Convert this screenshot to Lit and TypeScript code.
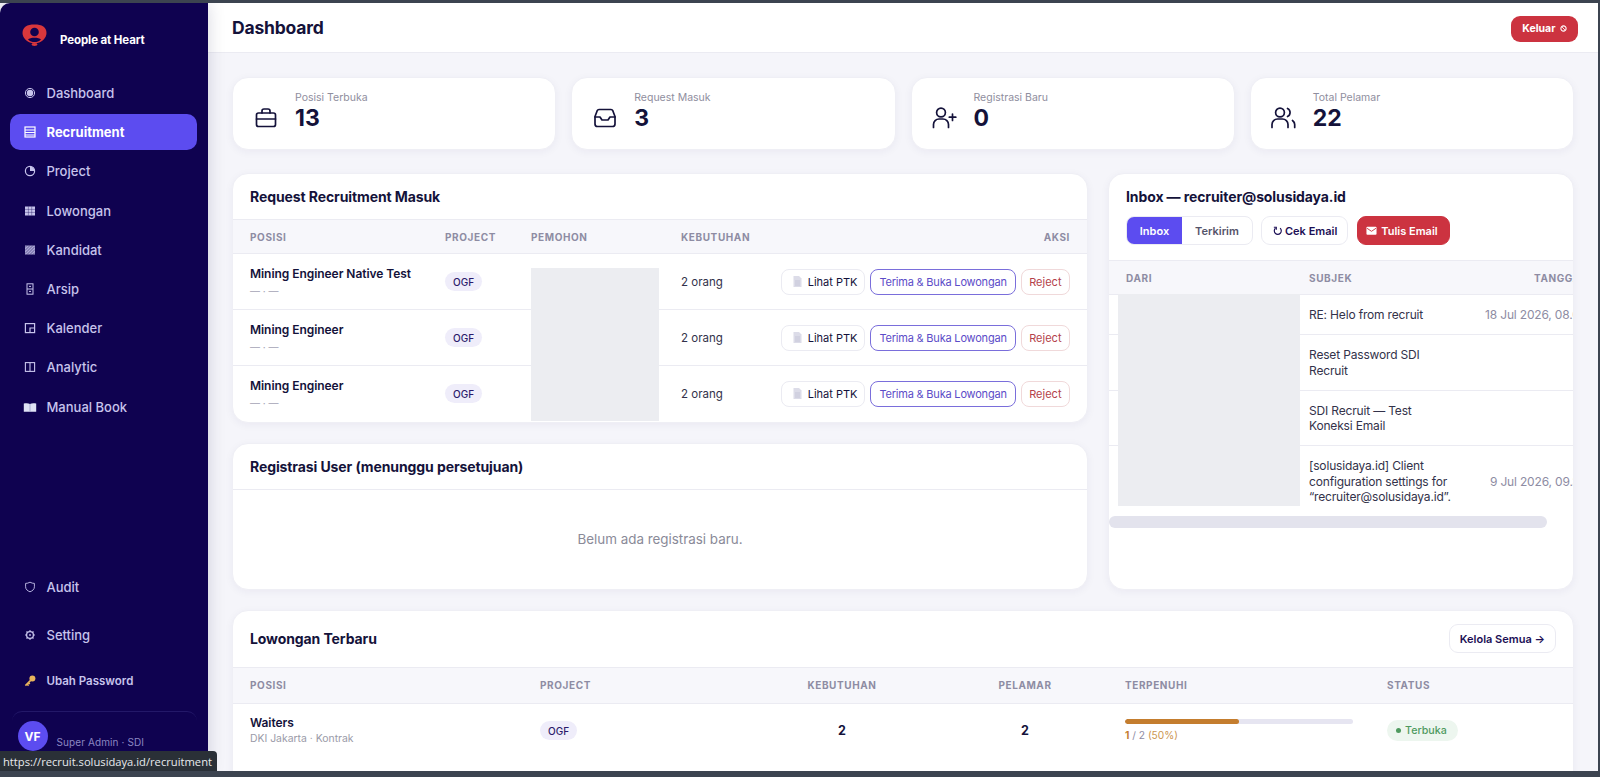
import { LitElement, css, html, svg } from "lit";
import { customElement } from "lit/decorators.js";

const navTop: [string, string, boolean?][] = [
  ["Dashboard", "dot"],
  ["Recruitment", "list", true],
  ["Project", "pie"],
  ["Lowongan", "grid"],
  ["Kandidat", "hatch"],
  ["Arsip", "cabinet"],
  ["Kalender", "cal"],
  ["Analytic", "split"],
  ["Manual Book", "book"],
];

const glyph = (name: string) => {
  switch (name) {
    case "dot":
      return svg`<circle cx="7" cy="7" r="4.6" fill="none" stroke="currentColor" stroke-width="1"/><circle cx="7" cy="7" r="3.2" fill="currentColor"/>`;
    case "list":
      return svg`<rect x="2" y="2" width="10" height="10" fill="none" stroke="currentColor" stroke-width="1.2"/><path d="M2 5h10M2 7.5h10M2 10h10" stroke="currentColor" stroke-width="1.2"/>`;
    case "pie":
      return svg`<circle cx="7" cy="7" r="4.6" fill="none" stroke="currentColor" stroke-width="1.2"/><path d="M7 7V2.4A4.6 4.6 0 0 1 11.6 7Z" fill="currentColor"/>`;
    case "grid":
      return svg`<rect x="2" y="2.5" width="10" height="9" fill="currentColor"/><path d="M2 5.4h10M2 8.4h10M5.4 2.5v9M8.7 2.5v9" stroke="#0f0250" stroke-width=".35"/>`;
    case "hatch":
      return svg`<rect x="2" y="2.5" width="10" height="9" fill="currentColor" opacity=".85"/><path d="M2 4.5l2-2M2 7.5l5-5M2 10.5l8-8M4 11.5l8-8M7 11.5l5-5M10 11.5l2-2" stroke="#0f0250" stroke-width=".45"/>`;
    case "cabinet":
      return svg`<rect x="4" y="1.8" width="6" height="10.4" fill="none" stroke="currentColor" stroke-width="1"/><path d="M4 7h6M6 4.4h2M6 9.4h2" stroke="currentColor" stroke-width="1"/>`;
    case "cal":
      return svg`<rect x="2.4" y="2.6" width="9.2" height="9" fill="none" stroke="currentColor" stroke-width="1.2"/><path d="M7 11.6V7h4.6" fill="none" stroke="currentColor" stroke-width="1.2"/>`;
    case "split":
      return svg`<rect x="2.4" y="2.6" width="9.2" height="8.8" fill="none" stroke="currentColor" stroke-width="1.1"/><path d="M7 2.6v8.8" stroke="currentColor" stroke-width="1.1"/>`;
    case "book":
      return svg`<path d="M.8 3.6C3 3 5.4 3 7 4c1.6-1 4-1 6.2-.4v8.2H.8Z" fill="#dfe3f5"/><path d="M7 4v7.6" stroke="#8d93c4" stroke-width=".7"/>`;
    case "shield":
      return svg`<path d="M7 2.2c1.6.9 3 1.2 4.4 1.2v3.4c0 2.6-2 4.1-4.4 5-2.4-.9-4.4-2.4-4.4-5V3.4C4 3.4 5.4 3.1 7 2.2Z" fill="none" stroke="currentColor" stroke-width=".9"/>`;
    case "gear":
      return svg`<circle cx="7" cy="7" r="3.4" fill="none" stroke="currentColor" stroke-width="1.3"/><circle cx="7" cy="7" r=".9" fill="currentColor"/><path d="M7 2v1.4M7 10.6V12M2 7h1.4M10.6 7H12M3.5 3.5l1 1M9.5 9.5l1 1M10.5 3.5l-1 1M4.5 9.5l-1 1" stroke="currentColor" stroke-width="1.1"/>`;
    case "key":
      return svg`<circle cx="9.4" cy="4.6" r="3" fill="#e8b45c"/><path d="M7.6 6.4L2.4 11.6M4 10l1.6 1.6M5.4 8.6L6.8 10" stroke="#e8b45c" stroke-width="1.6" fill="none"/>`;
  }
  return svg``;
};

const navIcon = (name: string) =>
  html`<svg class="nav-icon" viewBox="0 0 14 14">${glyph(name)}</svg>`;

const statIcons: Record<string, unknown> = {
  brief: svg`<rect x="2.5" y="7" width="19" height="13.5" rx="2"/><path d="M8 7V5a2 2 0 0 1 2-2h4a2 2 0 0 1 2 2v2M2.5 13h19"/>`,
  inbox: svg`<path d="M6 3.5h12a2 2 0 0 1 1.8 1.2L22 10.5V18a2.5 2.5 0 0 1-2.5 2.5h-15A2.5 2.5 0 0 1 2 18v-7.5l2.2-5.8A2 2 0 0 1 6 3.5Z"/><path d="M2 11h5l2 3h6l2-3h5"/>`,
  plus: svg`<circle cx="8" cy="6.5" r="4.4"/><path d="M.5 21.5v-3A5.5 5.5 0 0 1 6 13h4a5.5 5.5 0 0 1 5.5 5.5v3M19.5 8v6.5M16.3 11.2h6.5"/>`,
  users: svg`<circle cx="8" cy="6.5" r="4.4"/><path d="M0 21.5v-3A5.5 5.5 0 0 1 5.5 13h5a5.5 5.5 0 0 1 5.5 5.5v3M15.5 2.5a4.4 4.4 0 0 1 0 8M20.5 14.5a5.5 5.5 0 0 1 2.2 4v3"/>`,
};

const requests = ["Mining Engineer Native Test", "Mining Engineer", "Mining Engineer"];

const mails: [string, string][] = [
  ["RE: Helo from recruit", "18 Jul 2026, 08.00"],
  ["Reset Password SDI Recruit", ""],
  ["SDI Recruit — Test Koneksi Email", ""],
  ["[solusidaya.id] Client configuration settings for “recruiter@solusidaya.id”.", "9 Jul 2026, 09.30"],
];

@customElement("app-root")
export class AppRoot extends LitElement {
  static styles = css`
    :host {
      display: block;
      width: 1600px;
      height: 777px;
      overflow: hidden;
      background: #3c4450;
      font-family: Inter, "Noto Sans", sans-serif;
      color: #14123a;
    }
    * { box-sizing: border-box; }

    .window {
      position: relative;
      display: flex;
      width: 1598px;
      height: 768px;
      margin-top: 3px;
      background: #f5f5fa;
      overflow: hidden;
    }

    /* sidebar */
    .side {
      flex: 0 0 208px;
      display: flex;
      flex-direction: column;
      background: #0f0250;
      border-radius: 10px 0 0 0;
      box-shadow: 0 0 18px rgba(15, 10, 60, 0.16);
      z-index: 2;
      padding: 0 11px 0 9.5px;
      color: #c7c4ec;
    }
    .brand {
      display: flex;
      align-items: center;
      gap: 13px;
      height: 72px;
      padding: 2px 0 0 12.5px;
      color: #fff;
      font-size: 11.5px;
      font-weight: 700;
      letter-spacing: -0.1px;
    }
    .brand svg { width: 25px; height: 22px; margin-top: -10px; }
    .nav { display: flex; flex-direction: column; gap: 3.2px; }
    .item {
      display: flex;
      align-items: center;
      height: 36px;
      padding-left: 13px;
      gap: 10px;
      border-radius: 10px;
      font-size: 13px;
      font-weight: 500;
    }
    .item.on { background: #5c4cf0; color: #fff; font-weight: 700; }
    .nav-icon { width: 14px; height: 14px; flex: none; }
    .nav-bottom { margin-top: auto; display: flex; flex-direction: column; }
    .nav-bottom .item { height: 48px; }
    .nav-bottom .item.small { height: 44px; font-size: 11.5px; font-weight: 600; }
    .me {
      display: flex;
      gap: 9px;
      height: 60px;
      margin: 8px 0 0 2px;
      padding: 9px 6px 0 6px;
      border-top: 1px solid #231868;
      border-radius: 10px 10px 0 0;
    }
    .avatar {
      flex: none;
      width: 30px;
      height: 30px;
      border-radius: 50%;
      background: #5c4cf0;
      color: #fff;
      font-size: 12px;
      font-weight: 700;
      display: flex;
      align-items: center;
      justify-content: center;
    }
    .role { margin-top: 15px; font-size: 10px; color: #8b87c2; letter-spacing: 0.1px; }

    /* main */
    .main { flex: 1; min-width: 0; display: flex; flex-direction: column; }
    .top {
      flex: none;
      height: 50px;
      display: flex;
      align-items: center;
      justify-content: space-between;
      padding: 0 20px 0 24px;
      background: #fff;
      border-bottom: 1px solid #ebebf2;
    }
    h1 { margin: 0; font-size: 17.5px; font-weight: 700; letter-spacing: -0.2px; }
    .logout {
      display: flex;
      align-items: center;
      gap: 4px;
      height: 26px;
      margin-top: 2px;
      padding: 0 11.5px;
      border-radius: 9px;
      background: #cc3340;
      color: #fff;
      font-size: 10.5px;
      font-weight: 700;
    }
    .logout svg { width: 7px; height: 7px; }

    .content {
      flex: 1;
      min-height: 0;
      padding: 24px 24px 0;
      display: flex;
      flex-direction: column;
      gap: 20px;
    }
    .card {
      background: #fff;
      border: 1px solid #efeff5;
      border-radius: 16px;
      box-shadow: 0 2px 8px rgba(30, 25, 90, 0.05);
      overflow: hidden;
    }

    .stats { display: grid; grid-template-columns: repeat(4, 1fr); gap: 15px; margin-bottom: 3px; }
    .stat {
      height: 73px;
      display: grid;
      grid-template-columns: 24px 1fr;
      grid-template-rows: auto auto;
      column-gap: 17px;
      align-content: center;
      padding: 0 0 3px 21px;
    }
    .stat .label { grid-column: 2; margin-bottom: -2px; font-size: 10.5px; color: #8f8e9e; line-height: 14px; }
    .stat svg {
      grid-column: 1;
      grid-row: 2;
      align-self: center;
      width: 24px;
      height: 24px;
      fill: none;
      stroke: #14123a;
      stroke-width: 1.7;
      stroke-linecap: round;
      stroke-linejoin: round;
      overflow: visible;
    }
    .stat .num { grid-column: 2; grid-row: 2; font-size: 23px; font-weight: 700; line-height: 30px; }

    .mid { display: grid; grid-template-columns: 856px 466px; column-gap: 20px; }
    .mid-left { display: flex; flex-direction: column; gap: 20px; }
    .head {
      display: flex;
      align-items: center;
      justify-content: space-between;
      padding: 0 17px;
      height: 45px;
      font-size: 14px;
      font-weight: 700;
      letter-spacing: -0.1px;
    }

    table { width: 100%; border-collapse: collapse; table-layout: fixed; }
    th {
      height: 34px;
      padding: 0 17px;
      background: #f7f7fb;
      border-top: 1px solid #ebebf2;
      border-bottom: 1px solid #ebebf2;
      font-size: 10px;
      font-weight: 700;
      letter-spacing: 0.6px;
      color: #8e8ca3;
      text-align: left;
    }
    td { padding: 0 17px; font-size: 12px; border-bottom: 1px solid #ebebf2; color: #33324a; }
    tr:last-child td { border-bottom: 0; }
    .r { text-align: right; }
    .c { text-align: center; }
    .name { font-weight: 600; color: #14123a; line-height: 16px; letter-spacing: -0.05px; }
    .sub { margin-top: 2px; font-size: 10px; color: #a2a1b3; line-height: 14px; }
    .pill {
      display: inline-flex;
      align-items: center;
      height: 19px;
      padding: 0 8px;
      border-radius: 10px;
      background: #efedfa;
      color: #2c1a6b;
      font-size: 10px;
      font-weight: 500;
    }

    .wrap { position: relative; }
    .mask { position: absolute; background: #ecedf1; }
    .req tbody tr { height: 56px; }
    .req .qty { white-space: nowrap; font-size: 11.5px; }
    .req .mask { left: 298px; top: 49px; width: 128px; height: 153px; }
    .req .cell-name { padding-right: 0; }
    .req .cell-acts { padding-left: 0; overflow: visible; }
    .acts { display: flex; justify-content: flex-end; gap: 5px; }
    .btn {
      display: inline-flex;
      align-items: center;
      justify-content: center;
      gap: 6px;
      height: 26px;
      padding: 0 7px 0 11px;
      border: 1px solid #ebebf2;
      border-radius: 8px;
      background: #fff;
      font-size: 11px;
      font-weight: 400;
      color: #14123a;
      white-space: nowrap;
    }
    .btn svg { width: 9px; height: 11px; }
    .btn.ok { border-color: #7a6edb; color: #5c4cc8; padding: 0 8px; letter-spacing: -0.2px; }
    .btn.no { border-color: #f0d9da; color: #b4424a; padding: 0 7.5px; }

    .empty {
      height: 100px;
      display: flex;
      align-items: center;
      justify-content: center;
      border-top: 1px solid #ebebf2;
      font-size: 13.4px;
      color: #8a8a98;
    }

    /* inbox */
    .inbox { display: flex; flex-direction: column; }
    .inbox .title { padding: 14px 17px 0; font-size: 14px; font-weight: 700; line-height: 18px; letter-spacing: -0.1px; }
    .tools { display: flex; gap: 9px; padding: 10px 17px 15px; }
    .tabs {
      display: flex;
      height: 29px;
      margin-right: -1px;
      border: 1px solid #ebebf2;
      border-radius: 8px;
      overflow: hidden;
      font-size: 11px;
      font-weight: 600;
    }
    .tab { display: flex; align-items: center; justify-content: center; color: #55546a; width: 70px; }
    .tab.on { width: 55px; background: #5c4cf0; color: #fff; }
    .tool {
      display: flex;
      align-items: center;
      gap: 2px;
      height: 29px;
      padding: 0 10px 0 11px;
      border-radius: 9px;
      font-size: 11px;
      font-weight: 600;
      border: 1px solid #ebebf2;
      color: #1c0f55;
    }
    .tool svg { width: 10px; height: 10px; }
    .tool.red { background: #cc3340; border-color: #cc3340; color: #fff; padding: 0 11px 0 8px; gap: 4px; }
    .tool.red svg { width: 11px; height: 11px; }
    .scroller { overflow: hidden; }
    .mail { width: 494px; }
    .mail td { padding: 12px 17px; line-height: 15.3px; letter-spacing: -0.17px; }
    .mail td.subject { padding-right: 0; }
    .mail td.date { padding: 12px 16px 12px 0; color: #8e8ca3; white-space: nowrap; }
    .mail th:last-child { padding: 0 16px 0 0; }
    .mail .mask { left: 9px; top: 34px; width: 182px; height: 212px; }
    .scrollbar { flex: none; width: 438px; height: 12px; border-radius: 6px; background: #e3e3ed; }

    /* lowongan */
    .jobs { flex: none; height: 180px; border-radius: 16px 16px 0 0; }
    .jobs .head { height: 56px; }
    .kelola {
      display: flex;
      align-items: center;
      height: 29px;
      padding: 0 10px;
      border: 1px solid #ebebf2;
      border-radius: 9px;
      font-size: 11px;
      font-weight: 600;
      color: #1c0f55;
      letter-spacing: 0;
    }
    .jobs th { height: 36px; }
    .jobs tbody tr { height: 55px; }
    .jobs .sub { margin-top: 1px; font-size: 10.4px; color: #9a9aa8; }
    .jobs .cell-bar { padding-right: 0; }
    .big { font-size: 12.5px; font-weight: 700; color: #14123a; }
    .bar { width: 228px; height: 5px; border-radius: 3px; background: #e6e5f1; overflow: hidden; }
    .bar div { height: 100%; background: #c47d2e; border-radius: 3px; }
    .cap { margin-top: 4px; font-size: 10.2px; line-height: 14px; color: #8e8ca3; }
    .cap b { color: #c47d2e; }
    .cap span { color: #cc9550; }
    .status {
      display: inline-flex;
      align-items: center;
      gap: 4px;
      height: 21px;
      padding: 0 11px 0 9px;
      border-radius: 11px;
      background: #edf6ef;
      color: #4f9a5f;
      font-size: 10.7px;
      font-weight: 500;
    }
    .status i { width: 5px; height: 5px; border-radius: 50%; background: #4f9a5f; }

    /* browser link tooltip */
    .link {
      position: absolute;
      left: 0;
      bottom: 0;
      z-index: 3;
      height: 20px;
      padding: 0 5px 0 3px;
      display: flex;
      align-items: center;
      background: #2a3037;
      border-radius: 0 4px 0 0;
      color: #e8eaed;
      font-family: "Open Sans", "Noto Sans", sans-serif;
      font-size: 11.2px;
      white-space: nowrap;
    }
  `;

  render() {
    return html`
      <div class="window">
        <aside class="side">
          <div class="brand">
            <svg viewBox="0 0 25 22">
              <path d="M12.5 .5C20 .5 24.5 3 24.5 9C24.5 14 20 18 15.5 19H9.5C5 18 .5 14 .5 9C.5 3 5 .5 12.5 .5Z" fill="#d8373c"/>
              <circle cx="12.5" cy="8" r="4.3" fill="#10024f"/>
              <path d="M6 15.5C8 13 17 13 19 15.5C17 17.5 15 18 12.5 18C10 18 8 17.5 6 15.5Z" fill="#10024f"/>
              <ellipse cx="12.5" cy="20.5" rx="3" ry="1.4" fill="#d8373c"/>
            </svg>
            People at Heart
          </div>
          <nav class="nav">
            ${navTop.map(
              ([label, icon, on]) => html`<div class="item ${on ? "on" : ""}">${navIcon(icon)}${label}</div>`
            )}
          </nav>
          <div class="nav-bottom">
            <div class="item">${navIcon("shield")}Audit</div>
            <div class="item">${navIcon("gear")}Setting</div>
            <div class="item small">${navIcon("key")}Ubah Password</div>
            <div class="me">
              <div class="avatar">VF</div>
              <div class="role">Super Admin · SDI</div>
            </div>
          </div>
        </aside>

        <main class="main">
          <header class="top">
            <h1>Dashboard</h1>
            <div class="logout">
              Keluar
              <svg viewBox="0 0 8 8"><circle cx="4" cy="4" r="3" fill="none" stroke="#fff" stroke-width="1.2"/><path d="M2.4 2.4l3.2 3.2" stroke="#fff"/></svg>
            </div>
          </header>
          <div class="content">
            <section class="stats">
              ${this.stat("brief", "Posisi Terbuka", "13")}
              ${this.stat("inbox", "Request Masuk", "3")}
              ${this.stat("plus", "Registrasi Baru", "0")}
              ${this.stat("users", "Total Pelamar", "22")}
            </section>

            <section class="mid">
              <div class="mid-left">
                <div class="card">
                  <div class="head">Request Recruitment Masuk</div>
                  <div class="wrap req">
                    <table>
                      <colgroup>
                        <col style="width:195px" /><col style="width:86px" /><col style="width:150px" /><col style="width:100px" /><col />
                      </colgroup>
                      <thead>
                        <tr><th>POSISI</th><th>PROJECT</th><th>PEMOHON</th><th>KEBUTUHAN</th><th class="r">AKSI</th></tr>
                      </thead>
                      <tbody>
                        ${requests.map(
                          (r) => html`<tr>
                            <td class="cell-name">
                              <div class="name">${r}</div>
                              <div class="sub">— · —</div>
                            </td>
                            <td><span class="pill">OGF</span></td>
                            <td></td>
                            <td class="qty">2 orang</td>
                            <td class="cell-acts">
                              <div class="acts">
                                <span class="btn"><svg viewBox="0 0 9 11"><path d="M.5 0h5.5L8.5 2.5V11H.5Z" fill="#dcdce8"/><path d="M2 5h5M2 7h5M2 9h5" stroke="#b9b9cc" stroke-width=".6"/></svg>Lihat PTK</span>
                                <span class="btn ok">Terima &amp; Buka Lowongan</span>
                                <span class="btn no">Reject</span>
                              </div>
                            </td>
                          </tr>`
                        )}
                      </tbody>
                    </table>
                    <div class="mask"></div>
                  </div>
                </div>
                <div class="card">
                  <div class="head">Registrasi User (menunggu persetujuan)</div>
                  <div class="empty">Belum ada registrasi baru.</div>
                </div>
              </div>

              <div class="card inbox">
                <div class="title">Inbox — recruiter@solusidaya.id</div>
                <div class="tools">
                  <div class="tabs"><div class="tab on">Inbox</div><div class="tab">Terkirim</div></div>
                  <div class="tool">
                    <svg viewBox="0 0 12 12"><path d="M3 2.6A4.2 4.2 0 1 0 8.5 2.6" fill="none" stroke="#1c0f55" stroke-width="1.4"/><path d="M1 1.5h3v3" fill="none" stroke="#1c0f55" stroke-width="1.3"/></svg>
                    Cek Email
                  </div>
                  <div class="tool red">
                    <svg viewBox="0 0 12 12"><rect x=".5" y="2" width="11" height="8.5" rx="1" fill="#fff"/><path d="M1 3.5l5 3.4 5-3.4" fill="none" stroke="#cc3340" stroke-width="1"/></svg>
                    Tulis Email
                  </div>
                </div>
                <div class="scroller">
                  <div class="wrap mail">
                    <table>
                      <colgroup><col style="width:183px" /><col style="width:165px" /><col /></colgroup>
                      <thead><tr><th>DARI</th><th>SUBJEK</th><th class="r">TANGGAL</th></tr></thead>
                      <tbody>
                        ${mails.map(
                          ([s, d]) => html`<tr><td></td><td class="subject">${s}</td><td class="date r">${d}</td></tr>`
                        )}
                      </tbody>
                    </table>
                    <div class="mask"></div>
                  </div>
                </div>
                <div class="scrollbar"></div>
              </div>
            </section>

            <section class="card jobs">
              <div class="head">Lowongan Terbaru<span class="kelola">Kelola Semua →</span></div>
              <table>
                <colgroup>
                  <col style="width:290px" /><col style="width:219px" /><col style="width:200px" /><col style="width:166px" /><col style="width:262px" /><col />
                </colgroup>
                <thead>
                  <tr><th>POSISI</th><th>PROJECT</th><th class="c">KEBUTUHAN</th><th class="c">PELAMAR</th><th>TERPENUHI</th><th>STATUS</th></tr>
                </thead>
                <tbody>
                  <tr>
                    <td><div class="name">Waiters</div><div class="sub">DKI Jakarta · Kontrak</div></td>
                    <td><span class="pill">OGF</span></td>
                    <td class="c big">2</td>
                    <td class="c big">2</td>
                    <td class="cell-bar">
                      <div class="bar"><div style="width:50%"></div></div>
                      <div class="cap"><b>1</b> / 2 <span>(50%)</span></div>
                    </td>
                    <td><span class="status"><i></i>Terbuka</span></td>
                  </tr>
                </tbody>
              </table>
            </section>
          </div>
        </main>

        <div class="link">https://recruit.solusidaya.id/recruitment</div>
      </div>
    `;
  }

  stat(icon: string, label: string, num: string) {
    return html`<div class="card stat">
      <div class="label">${label}</div>
      <svg viewBox="0 0 24 24">${statIcons[icon]}</svg>
      <div class="num">${num}</div>
    </div>`;
  }
}
